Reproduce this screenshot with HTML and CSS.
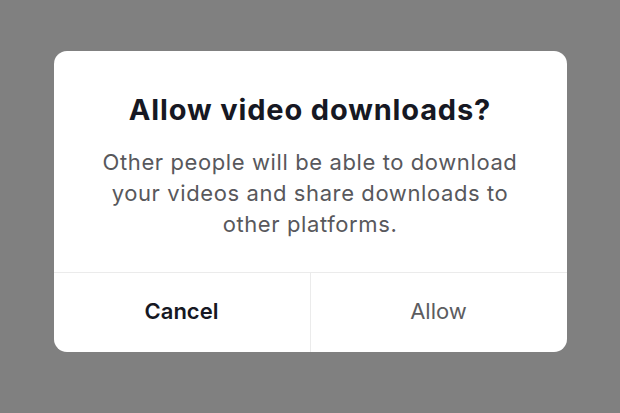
FILE: index.html
```html
<!DOCTYPE html>
<html lang="en">
<head>
    <meta charset="UTF-8">
    <meta name="viewport" content="width=device-width, initial-scale=1.0">
    <title>Allow video downloads?</title>
    <link rel="stylesheet" href="styles.css">
</head>
<body>
    <div class="overlay">
        <div class="dialog">
            <div class="dialog-body">
                <h1>Allow video downloads?</h1>
                <p>Other people will be able to download your videos and share downloads to other platforms.</p>
            </div>
            <div class="dialog-actions">
                <button class="btn btn-cancel">Cancel</button>
                <button class="btn btn-allow">Allow</button>
            </div>
        </div>
    </div>
</body>
</html>
```

FILE: styles.css
```css
html, body {
    margin: 0;
    height: 100%;
}
body {
    font-family: Inter, 'Noto Sans', Arial, sans-serif;
    background-color: #808080;
}
.overlay {
    height: 100%;
    display: flex;
    justify-content: center;
    padding-top: 51px;
    box-sizing: border-box;
}
.dialog {
    width: 513px;
    height: 301px;
    background-color: white;
    border-radius: 13px;
    display: flex;
    flex-direction: column;
    overflow: hidden;
}
.dialog-body {
    height: 222px;
    box-sizing: border-box;
    padding: 41px 44px 0;
    text-align: center;
    border-bottom: 1px solid #ebebeb;
}
h1 {
    margin: 0 0 19px;
    font-size: 29px;
    font-weight: 700;
    color: #161823;
    line-height: 36px;
    letter-spacing: 0.85px;
}
p {
    margin: 0;
    font-size: 22px;
    line-height: 31px;
    color: #58585c;
    letter-spacing: 0.6px;
}
.dialog-actions {
    flex: 1;
    display: flex;
}
.btn {
    flex: 1;
    border: none;
    background: none;
    font-family: inherit;
    font-size: 22px;
    padding: 0 0 4px;
}
.btn-cancel {
    font-weight: 600;
    color: #161823;
    border-right: 1px solid #ebebeb;
}
.btn-allow {
    font-weight: 400;
    color: #5c5c60;
}
```
